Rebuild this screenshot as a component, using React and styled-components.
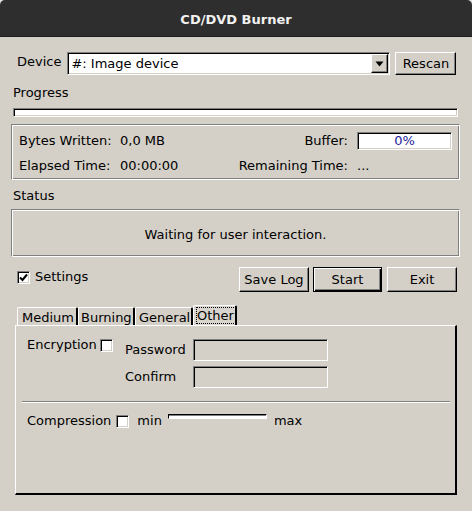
import React from 'react';
import styled, { createGlobalStyle } from 'styled-components';

const BG = '#d4d0c8';
const SHADOW = '#808080';
const HILITE = '#ffffff';

const Global = createGlobalStyle`
  html, body { margin: 0; padding: 0; background: #e4e4e4; }
  body {
    font-family: "DejaVu Sans", "Liberation Sans", sans-serif;
    font-size: 13px;
    line-height: 16px;
    color: #000;
  }
  * { box-sizing: border-box; }
`;

const Window = styled.div`
  width: 472px;
  height: 511px;
  background: ${BG};
  display: flex;
  flex-direction: column;
  border-radius: 5px 5px 0 0;
  overflow: hidden;
`;

const TitleBar = styled.div`
  height: 37px;
  flex: none;
  background: #2f2e2e;
  color: #f2f2f0;
  font-weight: bold;
  font-size: 13px;
  display: flex;
  align-items: center;
  justify-content: center;
  padding-top: 3px;
  border-bottom: 1px solid #1e1e1e;
`;

const Body = styled.div`
  flex: 1;
  display: flex;
  flex-direction: column;
  padding: 0 12px 0 11px;
`;

const Row = styled.div`
  display: flex;
  align-items: center;
  flex: none;
  margin-top: ${(p) => p.$mt || 0}px;
  height: ${(p) => (p.$h ? `${p.$h}px` : 'auto')};
  padding-left: ${(p) => p.$pl || 0}px;
  padding-right: ${(p) => p.$pr || 0}px;
`;

const Label = styled.span`
  white-space: nowrap;
  flex: none;
  width: ${(p) => (p.$w ? `${p.$w}px` : 'auto')};
  margin-left: ${(p) => p.$ml || 0}px;
  margin-right: ${(p) => p.$mr || 0}px;
  margin-top: ${(p) => p.$mt || 0}px;
  align-self: ${(p) => (p.$top ? 'flex-start' : 'auto')};
`;

const SectionLabel = styled.div`
  margin-top: ${(p) => p.$mt}px;
  padding-left: 2px;
  height: 16px;
`;

const Combo = styled.div`
  width: 323px;
  height: 23px;
  margin-left: 6px;
  background: #fff;
  border: 1px solid;
  border-color: ${SHADOW} ${HILITE} ${HILITE} ${SHADOW};
  box-shadow: inset 1px 1px 0 #000, inset -1px -1px 0 ${BG};
  display: flex;
  align-items: stretch;
  padding: 1px;
`;

const ComboText = styled.span`
  flex: 1;
  padding-left: 2px;
  display: flex;
  align-items: center;
`;

const ComboArrow = styled.span`
  width: 17px;
  flex: none;
  background: ${BG};
  border: 1px solid;
  border-color: ${HILITE} #000 #000 ${HILITE};
  box-shadow: inset -1px -1px 0 ${SHADOW};
  display: flex;
  align-items: center;
  justify-content: center;
`;

const Button = styled.button`
  font-family: inherit;
  font-size: 13px;
  line-height: 16px;
  color: #000;
  width: ${(p) => p.$w}px;
  height: ${(p) => p.$h || 25}px;
  margin-left: ${(p) => p.$ml || 0}px;
  padding: 0;
  background: ${BG};
  flex: none;
  border: 1px solid;
  border-color: ${(p) => (p.$default ? '#000' : `${HILITE} #000 #000 ${HILITE}`)};
  box-shadow: ${(p) =>
    p.$default
      ? `inset 1px 1px 0 ${HILITE}, inset -1px -1px 0 #000, inset -2px -2px 0 ${SHADOW}`
      : `inset -1px -1px 0 ${SHADOW}`};
`;

const ProgressBar = styled.div`
  margin: 7px 0 0 2px;
  width: 445px;
  height: 9px;
  background: #fff;
  border: 1px solid;
  border-color: ${SHADOW} ${HILITE} ${HILITE} ${SHADOW};
  box-shadow: inset 1px 1px 0 #000, inset -1px -1px 0 ${BG};
`;

const GrooveBox = styled.div`
  width: 449px;
  flex: none;
  height: ${(p) => p.$h}px;
  margin-top: ${(p) => p.$mt}px;
  border: 1px solid ${SHADOW};
  border-right-color: ${HILITE};
  border-bottom-color: ${HILITE};
  box-shadow: inset 1px 1px 0 ${HILITE}, inset -1px -1px 0 ${SHADOW};
`;

const InfoFrame = styled(GrooveBox)`
  display: flex;
  flex-direction: column;
  padding: 7px 7px 4px 7px;
`;

const Spacer = styled.span`
  flex: 1;
`;

const ValueEntry = styled.div`
  width: 95px;
  height: 18px;
  flex: none;
  background: #fff;
  color: #1b1b9c;
  text-align: center;
  line-height: 15px;
  border: 1px solid;
  border-color: ${SHADOW} ${HILITE} ${HILITE} ${SHADOW};
  box-shadow: inset 1px 1px 0 #000, inset -1px -1px 0 ${BG};
`;

const ValueText = styled.span`
  width: 95px;
  flex: none;
`;

const StatusBox = styled(GrooveBox)`
  display: flex;
  align-items: center;
  justify-content: center;
  padding-top: 3px;
`;

const CheckGroup = styled.label`
  display: flex;
  align-items: center;
  height: 16px;
  flex: none;
  align-self: flex-start;
  margin-top: ${(p) => p.$mt || 0}px;
  margin-left: ${(p) => p.$ml || 0}px;
  gap: ${(p) => p.$gap || 5}px;
`;

const Box = styled.span`
  width: 13px;
  height: 13px;
  flex: none;
  background: #fff;
  border: 1px solid;
  border-color: ${SHADOW} ${HILITE} ${HILITE} ${SHADOW};
  box-shadow: inset 1px 1px 0 #000, inset -1px -1px 0 ${BG};
  display: flex;
  align-items: center;
  justify-content: center;
  margin-left: ${(p) => p.$ml || 0}px;
`;

const TabStrip = styled.div`
  display: flex;
  align-items: flex-end;
  height: 20px;
  margin: 13px 0 0 6px;
  flex: none;
`;

const Tab = styled.div`
  width: ${(p) => p.$w}px;
  height: ${(p) => (p.$active ? 20 : 18)}px;
  flex: none;
  display: flex;
  align-items: center;
  padding-left: ${(p) => p.$pl || 4}px;
  padding-top: ${(p) => (p.$active ? 0 : 2)}px;
  background: ${(p) => (p.$active ? '#d9d5ce' : BG)};
  border-left: 1px solid ${HILITE};
  border-top: 1px solid ${HILITE};
  border-right: 2px solid #000;
  border-top-left-radius: 2px;
  border-top-right-radius: 2px;
  white-space: nowrap;
`;

const FocusRing = styled.span`
  outline: 1px dotted #000;
  outline-offset: 0;
  padding: 0 1px 0 0;
  line-height: 15px;
`;

const Panel = styled.div`
  margin-left: 4px;
  width: 442px;
  height: 170px;
  flex: none;
  border-left: 1px solid ${HILITE};
  border-top: 1px solid ${HILITE};
  border-right: 2px solid #000;
  border-bottom: 2px solid #000;
  padding: 13px 0 0 0;
  display: flex;
  flex-direction: column;
`;

const EncGrid = styled.div`
  display: grid;
  grid-template-columns: 98px 68px 135px;
  grid-template-rows: 22px 22px;
  row-gap: 5px;
  padding-left: 11px;
`;

const GridLabel = styled.span`
  align-self: center;
  white-space: nowrap;
  margin-top: -1px;
  grid-column: ${(p) => p.$col};
  grid-row: ${(p) => p.$row};
`;

const Entry = styled.div`
  grid-column: 3;
  grid-row: ${(p) => p.$row};
  width: 135px;
  height: 22px;
  background: ${BG};
  border: 1px solid;
  border-color: ${SHADOW} ${HILITE} ${HILITE} ${SHADOW};
  box-shadow: inset 1px 1px 0 #000, inset -1px -1px 0 ${BG};
`;

const EncCell = styled(CheckGroup)`
  grid-column: 1;
  grid-row: 1;
`;

const Separator = styled.div`
  margin: 13px 5px 0 6px;
  height: 2px;
  border-top: 1px solid ${SHADOW};
  border-bottom: 1px solid ${HILITE};
`;

const Trough = styled.div`
  width: 99px;
  height: 5px;
  flex: none;
  align-self: flex-start;
  margin: 1px 7px 0 6px;
  background: #fff;
  border: 1px solid;
  border-color: #000 ${HILITE} ${HILITE} #000;
  box-shadow: inset 0 1px 0 ${SHADOW};
`;

const Check = () => (
  <svg width="9" height="9" viewBox="0 0 9 9">
    <path d="M1 4.5 L3.5 7 L8 1.5" fill="none" stroke="#000" strokeWidth="2" />
  </svg>
);

const Arrow = () => (
  <svg width="9" height="6" viewBox="0 0 9 6">
    <path d="M0.5 0.5 H8.5 L4.5 5.5 Z" fill="#000" />
  </svg>
);

export default function App() {
  return (
    <>
      <Global />
      <Window>
        <TitleBar>CD/DVD Burner</TitleBar>
        <Body>
          <Row $mt={15} $h={23} $pl={6}>
            <Label $top $mt={2}>Device</Label>
            <Combo>
              <ComboText>#: Image device</ComboText>
              <ComboArrow>
                <Arrow />
              </ComboArrow>
            </Combo>
            <Button $w={61} $h={23} $ml={5}>Rescan</Button>
          </Row>

          <SectionLabel $mt={10}>Progress</SectionLabel>
          <ProgressBar />

          <InfoFrame $mt={7} $h={56}>
            <Row $h={18}>
              <Label $w={101}>Bytes Written:</Label>
              <Label>0,0 MB</Label>
              <Spacer />
              <Label $mr={9}>Buffer:</Label>
              <ValueEntry>0%</ValueEntry>
            </Row>
            <Row $h={16} $mt={8}>
              <Label $w={101}>Elapsed Time:</Label>
              <Label>00:00:00</Label>
              <Spacer />
              <Label $mr={9}>Remaining Time:</Label>
              <ValueText>...</ValueText>
            </Row>
          </InfoFrame>

          <SectionLabel $mt={8}>Status</SectionLabel>
          <StatusBox $mt={5} $h={48}>Waiting for user interaction.</StatusBox>

          <Row $mt={10} $h={25} $pr={3}>
            <CheckGroup $ml={6} $mt={2}>
              <Box>
                <Check />
              </Box>
              <span>Settings</span>
            </CheckGroup>
            <Spacer />
            <Button $w={70}>Save Log</Button>
            <Button $w={69} $ml={4} $default>Start</Button>
            <Button $w={70} $ml={5}>Exit</Button>
          </Row>

          <TabStrip>
            <Tab $w={61}>Medium</Tab>
            <Tab $w={57} $pl={2}>Burning</Tab>
            <Tab $w={58} $pl={3}>General</Tab>
            <Tab $w={44} $pl={3} $active>
              <FocusRing>Other</FocusRing>
            </Tab>
          </TabStrip>

          <Panel>
            <EncGrid>
              <EncCell $mt={-2} $gap={3}>
                <span>Encryption</span>
                <Box />
              </EncCell>
              <GridLabel $col={2} $row={1}>Password</GridLabel>
              <Entry $row={1} />
              <GridLabel $col={2} $row={2}>Confirm</GridLabel>
              <Entry $row={2} />
            </EncGrid>
            <Separator />
            <Row $mt={10} $h={16} $pl={11}>
              <Label>Compression</Label>
              <Box $ml={5} />
              <Label $ml={8}>min</Label>
              <Trough />
              <Label>max</Label>
            </Row>
          </Panel>
        </Body>
      </Window>
    </>
  );
}
